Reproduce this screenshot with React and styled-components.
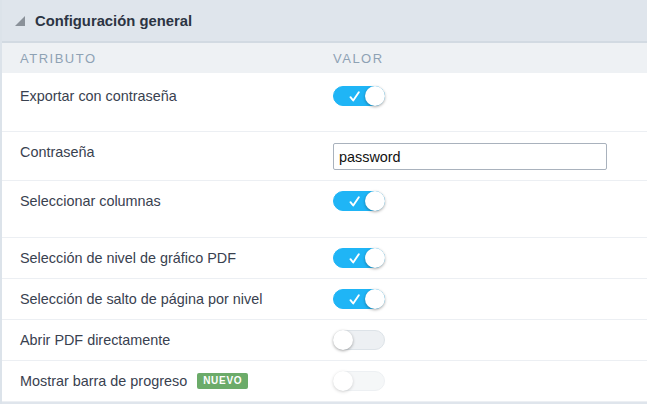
import React from 'react';
import styled, { createGlobalStyle } from 'styled-components';

const Global = createGlobalStyle`
  body {
    margin: 0;
    background: #ffffff;
    font-family: "Liberation Sans", Arial, sans-serif;
  }
`;

const Panel = styled.div`
  width: 647px;
  height: 404px;
  box-sizing: border-box;
  border-left: 2px solid #dce3ea;
  background: #ffffff;
  overflow: hidden;
  display: flex;
  flex-direction: column;
  & > * {
    flex-shrink: 0;
  }
`;

const Header = styled.div`
  height: 43px;
  box-sizing: border-box;
  display: flex;
  align-items: center;
  padding-left: 13px;
  background: #dfe5ec;
  border-bottom: 2px solid #d2dae2;
`;

const Caret = styled.span`
  width: 0;
  height: 0;
  border-left: 10px solid transparent;
  border-bottom: 10px solid #8a9199;
  margin-right: 10px;
  margin-top: 1px;
`;

const Title = styled.h2`
  margin: 0;
  font-size: 14.8px;
  font-weight: bold;
  color: #2c3443;
`;

const ColHead = styled.div`
  height: 30px;
  display: grid;
  grid-template-columns: 313px 1fr;
  align-items: center;
  padding-left: 18px;
  background: #eef1f4;
  font-size: 13px;
  letter-spacing: 1.5px;
  color: #8ea2b4;
  text-transform: uppercase;
`;

const Row = styled.div`
  display: grid;
  grid-template-columns: 313px 1fr;
  align-items: ${p => p.$align || 'center'};
  padding: ${p => p.$pad || '10px 0 10px 18px'};
  border-bottom: 1px solid #eceff3;
  font-size: 14.4px;
  color: #39414f;
`;

const Label = styled.div`
  display: flex;
  align-items: center;
  gap: 10px;
  padding-top: ${p => p.$top || 0};
`;

const Badge = styled.span`
  background: #6bab69;
  color: #ffffff;
  font-size: 10px;
  font-weight: bold;
  letter-spacing: 0.7px;
  padding: 2px 6px;
  border-radius: 2px;
  line-height: 12px;
`;

const Track = styled.span`
  position: relative;
  display: inline-block;
  width: 52px;
  height: 20px;
  box-sizing: border-box;
  border-radius: 10px;
  background: ${p => (p.$on ? '#1fb5f6' : '#edf0f3')};
  border: 1px solid ${p => (p.$on ? '#1fb5f6' : '#dde3e8')};
  opacity: ${p => (p.$disabled ? 0.5 : 1)};
  vertical-align: middle;
`;

const Knob = styled.span`
  position: absolute;
  top: -1px;
  ${p => (p.$on ? 'right: -1px;' : 'left: -1px;')}
  width: 20px;
  height: 20px;
  border-radius: 50%;
  background: #ffffff;
  box-shadow: 0 1px 3px rgba(0, 0, 0, 0.35);
`;

const Check = styled.svg`
  position: absolute;
  left: 15px;
  top: 4px;
`;

const Input = styled.input`
  width: 274px;
  height: 27px;
  box-sizing: border-box;
  border: 1px solid #a9b2bd;
  border-radius: 2px;
  padding: 0 5px;
  font-family: "Liberation Sans", Arial, sans-serif;
  font-size: 14.4px;
  color: #111;
  &:focus {
    outline: none;
  }
`;

const Cell = styled.div`
  display: flex;
  align-items: center;
`;

const Footer = styled.div`
  flex: 1;
  flex-shrink: 1;
  background: #dfe5ec;
`;

function Toggle({ on, disabled }) {
  return (
    <Track $on={on} $disabled={disabled}>
      {on && (
        <Check width="11" height="11" viewBox="0 0 11 11">
          <path d="M1.5 6.2 L4.2 9.5 L9.8 1.2" fill="none" stroke="#fff" strokeWidth="1.9" strokeLinecap="round" strokeLinejoin="round" />
        </Check>
      )}
      <Knob $on={on} />
    </Track>
  );
}

export default function App() {
  return (
    <Panel>
      <Global />
      <Header>
        <Caret />
        <Title>Configuración general</Title>
      </Header>
      <ColHead>
        <span>Atributo</span>
        <span>Valor</span>
      </ColHead>
      <Row $pad="13px 0 25px 18px">
        <Label>Exportar con contraseña</Label>
        <Cell><Toggle on /></Cell>
      </Row>
      <Row $pad="11px 0 10px 18px" $align="start">
        <Label $top="1px">Contraseña</Label>
        <Cell><Input defaultValue="password" /></Cell>
      </Row>
      <Row $pad="10px 0 26px 18px">
        <Label>Seleccionar columnas</Label>
        <Cell><Toggle on /></Cell>
      </Row>
      <Row>
        <Label>Selección de nivel de gráfico PDF</Label>
        <Cell><Toggle on /></Cell>
      </Row>
      <Row>
        <Label>Selección de salto de página por nivel</Label>
        <Cell><Toggle on /></Cell>
      </Row>
      <Row>
        <Label>Abrir PDF directamente</Label>
        <Cell><Toggle /></Cell>
      </Row>
      <Row>
        <Label>Mostrar barra de progreso <Badge>NUEVO</Badge></Label>
        <Cell><Toggle disabled /></Cell>
      </Row>
      <Footer />
    </Panel>
  );
}
